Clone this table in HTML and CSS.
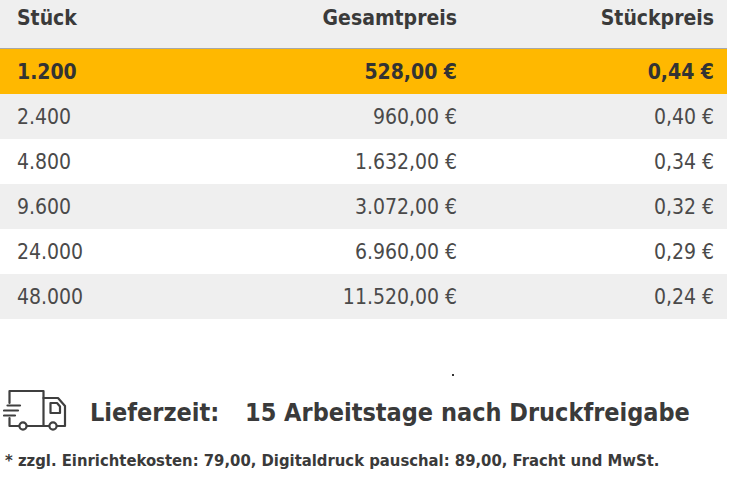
FILE: index.html
```html
<!DOCTYPE html>
<html lang="de">
<head>
<meta charset="utf-8">
<title>Staffelpreise</title>
<link rel="stylesheet" href="styles.css">
</head>
<body>
<div class="price-table">
  <div class="row head">
    <div class="c1">Stück</div>
    <div class="c2">Gesamtpreis</div>
    <div class="c3">Stückpreis</div>
  </div>
  <div class="row active">
    <div class="c1">1.200</div>
    <div class="c2">528,00 €</div>
    <div class="c3">0,44 €</div>
  </div>
  <div class="row grey">
    <div class="c1">2.400</div>
    <div class="c2">960,00 €</div>
    <div class="c3">0,40 €</div>
  </div>
  <div class="row">
    <div class="c1">4.800</div>
    <div class="c2">1.632,00 €</div>
    <div class="c3">0,34 €</div>
  </div>
  <div class="row grey">
    <div class="c1">9.600</div>
    <div class="c2">3.072,00 €</div>
    <div class="c3">0,32 €</div>
  </div>
  <div class="row">
    <div class="c1">24.000</div>
    <div class="c2">6.960,00 €</div>
    <div class="c3">0,29 €</div>
  </div>
  <div class="row grey">
    <div class="c1">48.000</div>
    <div class="c2">11.520,00 €</div>
    <div class="c3">0,24 €</div>
  </div>
</div>

<div class="dot"></div>

<div class="delivery">
  <svg class="truck" width="64" height="46" viewBox="0 0 64 46" fill="none" stroke="#3f3f3f" stroke-width="2.2" stroke-linecap="round" stroke-linejoin="round">
    <path d="M6.5 14V2H40.5V36"/>
    <path d="M40.5 9H55L62 17V37H54"/>
    <path d="M47.5 14H54L57 17.5V24H47.5Z"/>
    <path d="M4.5 16.5H17"/>
    <path d="M1 21.5H15"/>
    <path d="M1 26.5H12"/>
    <path d="M6.5 29V37H16"/>
    <path d="M24 37H46"/>
    <circle cx="20" cy="37" r="3.6"/>
    <circle cx="50" cy="37" r="3.6"/>
  </svg>
  <span class="label">Lieferzeit:</span>
  <span class="value">15 Arbeitstage nach Druckfreigabe</span>
</div>

<p class="note">* zzgl. Einrichtekosten: 79,00, Digitaldruck pauschal: 89,00, Fracht und MwSt.</p>
</body>
</html>
```

FILE: styles.css
```css
html, body {
  margin: 0;
  padding: 0;
  background: #ffffff;
}

body {
  font-family: "DejaVu Sans Condensed", "DejaVu Sans", sans-serif;
  font-stretch: condensed;
  color: #3a3a3a;
  width: 730px;
}

.price-table {
  width: 727px;
}

.row {
  display: grid;
  grid-template-columns: 183px 257px 1fr;
  align-items: center;
  height: 45px;
  padding: 0 13px 0 17px;
  font-size: 21px;
  color: #4a4a4a;
  background: #ffffff;
}

.row .c2,
.row .c3 {
  text-align: right;
}

.row.head {
  box-sizing: border-box;
  height: 49px;
  align-items: start;
  padding-top: 4px;
  line-height: 28px;
  font-weight: bold;
  color: #3a3a3a;
  background: #efefef;
  border-bottom: 1px solid #a8a8a8;
}

.row.active {
  background: #ffb800;
  font-weight: bold;
  color: #333333;
}

.row.grey {
  background: #efefef;
}

.dot {
  width: 2px;
  height: 2px;
  background: #333333;
  margin: 55px 0 0 452px;
}

.delivery {
  display: flex;
  align-items: center;
  margin-top: 13px;
  padding-left: 3px;
  height: 46px;
}

.truck {
  flex: none;
  margin-right: 23px;
}

.label,
.value {
  font-size: 25px;
  font-weight: bold;
  color: #3a3a3a;
}

.label {
  width: 155px;
}

.note {
  margin: 16px 0 0 5px;
  font-size: 16.5px;
  line-height: 19px;
  font-weight: bold;
  color: #3a3a3a;
}
```
